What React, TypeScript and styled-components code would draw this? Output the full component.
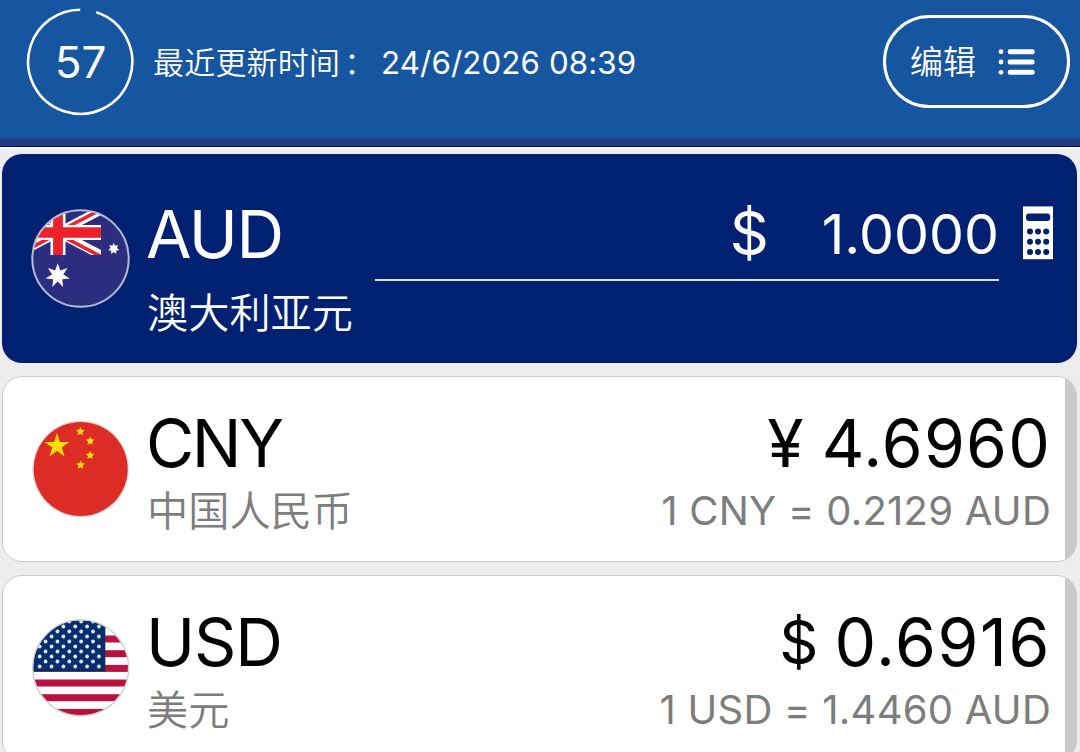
import React from "react";
import styled, { createGlobalStyle } from "styled-components";

const GlobalStyle = createGlobalStyle`
  * {
    box-sizing: border-box;
  }
  body {
    margin: 0;
    height: 752px;
    overflow: hidden;
    background: #ededed;
    font-family: Inter, "Noto Sans CJK SC", sans-serif;
  }
`;

const Header = styled.header`
  display: flex;
  align-items: center;
  height: 147px;
  padding: 0 10px 22px 26px;
  color: #fff;
  background: linear-gradient(
    #16559f 138px,
    #1b4a88 138px,
    #1b4a88 139px,
    #213a80 140px,
    #213a80 146px,
    #020f5a 146px
  );
`;

const Countdown = styled.div`
  display: grid;
  place-items: center;
  width: 109px;
  height: 109px;

  & > * {
    grid-area: 1 / 1;
  }

  span {
    font-size: 44px;
    line-height: 48px;
    padding-bottom: 1px;
  }
`;

const UpdatedAt = styled.div`
  display: flex;
  align-items: baseline;
  margin: 0 auto 0 18px;
  padding-bottom: 2px;
  line-height: 40px;
  white-space: nowrap;

  .label {
    width: 228px;
    font: 350 31px/40px "Noto Sans CJK SC", sans-serif;
    letter-spacing: 0.2px;
  }

  .colon {
    margin-left: 4px;
  }

  .time {
    font-size: 31.3px;
    letter-spacing: 0.1px;
  }
`;

const EditButton = styled.button`
  display: flex;
  align-items: center;
  gap: 22px;
  width: 187px;
  height: 93px;
  margin-top: -2px;
  padding: 0 0 0 24px;
  color: #fff;
  background: none;
  border: 3px solid #fff;
  border-radius: 47px;
  font: 350 33px/40px "Noto Sans CJK SC", sans-serif;

  span {
    padding-bottom: 3px;
  }
`;

const List = styled.main`
  display: flex;
  flex-direction: column;
  gap: 13px;
  padding: 5px 3px 0 2px;
  border-top: 2px solid #f8f8f8;
`;

const Card = styled.section<{ $active?: boolean }>`
  display: flex;
  align-items: flex-start;
  flex-shrink: 0;
  height: ${({ $active }) => ($active ? "209px" : "186px")};
  padding: ${({ $active }) => ($active ? "0 23px 0 29px" : "0 12px 0 28px")};
  color: ${({ $active }) => ($active ? "#fff" : "#000")};
  background: ${({ $active }) =>
    $active
      ? "#002171"
      : "linear-gradient(to left, #cacaca 11px, #fff 11px)"};
  border: ${({ $active }) => ($active ? "none" : "1px solid #cdcdcd")};
  border-radius: 20px;

  & > .flag {
    align-self: center;
  }
`;

const Label = styled.div<{ $active?: boolean }>`
  display: flex;
  flex-direction: column;
  gap: ${({ $active }) => ($active ? "19px" : "8px")};
  padding-top: ${({ $active }) => ($active ? "47px" : "33px")};
  margin-left: 17px;
`;

const Code = styled.div<{ $tracking: number }>`
  margin-left: -1px;
  font-size: 66px;
  line-height: 66px;
  letter-spacing: ${({ $tracking }) => $tracking}px;
`;

const Name = styled.div<{ $muted?: boolean }>`
  font: 350 41.2px/48px "Noto Sans CJK SC", sans-serif;
  color: ${({ $muted }) => ($muted ? "#7d7d7d" : "inherit")};
  white-space: nowrap;
`;

const AmountInput = styled.div`
  flex: 1;
  display: flex;
  justify-content: flex-end;
  align-items: flex-start;
  height: 78px;
  margin: 49px 24px 0 22px;
  border-bottom: 2px solid #dde2f0;
  font-size: 55.5px;
  line-height: 61px;

  .symbol {
    margin-right: 53px;
    font-size: 61px;
    line-height: 61px;
  }
`;

const CalculatorIcon = styled.svg`
  display: block;
  margin-top: 52px;
`;

const Quote = styled.div`
  display: flex;
  flex-direction: column;
  align-items: flex-end;
  gap: 11px;
  margin-left: auto;
  padding: 33px 13px 0 0;
`;

const Amount = styled.div<{ $tracking: number }>`
  display: flex;
  align-items: flex-start;
  font-size: 66px;
  line-height: 66px;
  letter-spacing: ${({ $tracking }) => $tracking}px;
`;

const Symbol = styled.span<{ $size: number; $gap: number }>`
  margin-right: ${({ $gap }) => $gap}px;
  font-size: ${({ $size }) => $size}px;
  letter-spacing: 0;
`;

const Rate = styled.div`
  font-size: 40px;
  line-height: 48px;
  letter-spacing: 0.25px;
  color: #7d7d7d;
  white-space: nowrap;
`;

const star = (cx: number, cy: number, r: number, inner: number, n = 5) =>
  Array.from({ length: n * 2 }, (_, i) => {
    const a = (Math.PI * i) / n - Math.PI / 2;
    const d = i % 2 ? inner : r;
    return `${(cx + d * Math.cos(a)).toFixed(2)},${(cy + d * Math.sin(a)).toFixed(2)}`;
  }).join(" ");

const FlagAU = () => (
  <svg className="flag" width="99" height="99" viewBox="0 0 99 99">
    <clipPath id="au">
      <circle cx="49.5" cy="49.5" r="48" />
    </clipPath>
    <clipPath id="au-canton">
      <rect x="-16" y="1" width="86" height="45" />
    </clipPath>
    <g clipPath="url(#au)">
      <rect width="99" height="99" fill="#2d2d80" />
      <g clipPath="url(#au-canton)">
        <path d="M-16 1 70 46M-16 46 70 1" stroke="#fff" strokeWidth="9" />
        <path
          d="M27 25 70 47.5M27 23 70 .5M-16 47 27 24.5M-16 -.5 27 22"
          stroke="#ee2029"
          strokeWidth="3.6"
        />
        <path d="M27 0V46" stroke="#fff" strokeWidth="15" />
        <path d="M-16 23.5H70" stroke="#fff" strokeWidth="15" />
        <path d="M27 0V46" stroke="#ee2029" strokeWidth="9.8" />
        <path d="M-16 23.5H70" stroke="#ee2029" strokeWidth="10.4" />
      </g>
      <polygon points={star(26.7, 66.7, 12.5, 5.8, 7)} fill="#fff" />
      <polygon points={star(82.7, 39.7, 5.8, 3.2, 7)} fill="#fff" />
    </g>
    <circle cx="49.5" cy="49.5" r="48.2" fill="none" stroke="#b4bbd2" strokeWidth="2" />
  </svg>
);

const FlagCN = () => (
  <svg className="flag" width="99" height="99" viewBox="0 0 99 99">
    <circle cx="49.7" cy="49" r="48.4" fill="#dfdcda" />
    <circle cx="49.7" cy="49" r="47" fill="#dc2c25" />
    <g fill="#ffde00">
      <polygon points={star(26, 26, 13, 5)} />
      <polygon points={star(49.3, 11.5, 4.6, 2.2)} />
      <polygon points={star(59.1, 21, 4.6, 2.2)} />
      <polygon points={star(59.1, 35.3, 4.6, 2.2)} />
      <polygon points={star(49.5, 45, 4.6, 2.2)} />
    </g>
  </svg>
);

const starRows = Array.from({ length: 10 }, (_, row) =>
  Array.from({ length: row % 2 ? 5 : 6 }, (_, col) => ({
    x: (row % 2 ? 14.6 : 8.7) + col * 11.85,
    y: 48.3 - row * 5,
  }))
).flat();

const FlagUS = () => (
  <svg className="flag" width="99" height="99" viewBox="0 0.8 99 99">
    <clipPath id="us">
      <circle cx="49.7" cy="49.6" r="47.6" />
    </clipPath>
    <g clipPath="url(#us)">
      <rect width="99" height="99" fill="#fff" />
      {[2.6, 17.3, 32, 46.7, 61.3, 76, 90.7].map((y) => (
        <rect key={y} y={y} width="99" height="7" fill="#b9123f" />
      ))}
      <rect width="74.3" height="53.3" fill="#062e6c" />
      {starRows.map(({ x, y }) => (
        <circle key={`${x}-${y}`} cx={x} cy={y} r="1.9" fill="#dcebfa" />
      ))}
    </g>
    <circle cx="49.7" cy="49.6" r="47.9" fill="none" stroke="#cfcfcf" strokeWidth="1.4" />
  </svg>
);

const rows = [
  {
    code: "CNY",
    name: "中国人民币",
    tracking: -2.4,
    Flag: FlagCN,
    symbol: "¥",
    symbolSize: 66,
    symbolGap: 18,
    amount: "4.6960",
    amountTracking: 1.2,
    rate: "1 CNY = 0.2129 AUD",
  },
  {
    code: "USD",
    name: "美元",
    tracking: -1.1,
    Flag: FlagUS,
    symbol: "$",
    symbolSize: 61,
    symbolGap: 16,
    amount: "0.6916",
    amountTracking: 1.6,
    rate: "1 USD = 1.4460 AUD",
  },
];

const App: React.FC = () => {
  return (
    <>
      <GlobalStyle />
      <Header>
        <Countdown>
          <svg width="109" height="109" viewBox="0 0 109 109" fill="none">
            <circle
              cx="54.2"
              cy="53.8"
              r="52.1"
              stroke="#fff"
              strokeWidth="2.6"
              pathLength="60"
              strokeDasharray="57 3"
              transform="rotate(-72 54.2 53.8)"
            />
          </svg>
          <span>57</span>
        </Countdown>
        <UpdatedAt>
          <span className="label">
            最近更新时间<span className="colon">：</span>
          </span>
          <span className="time">24/6/2026 08:39</span>
        </UpdatedAt>
        <EditButton>
          <span>编辑</span>
          <svg width="38" height="28" viewBox="0 0 38 28" fill="#fff">
            {[3.7, 14, 24.3].map((y) => (
              <g key={y}>
                <circle cx="3" cy={y} r="2.4" />
                <rect x="9.7" y={y - 2.5} width="27" height="5" rx="2.3" />
              </g>
            ))}
          </svg>
        </EditButton>
      </Header>
      <List>
        <Card $active>
          <FlagAU />
          <Label $active>
            <Code $tracking={-1.4}>AUD</Code>
            <Name>澳大利亚元</Name>
          </Label>
          <AmountInput>
            <span className="symbol">$</span>
            <span>1.0000</span>
          </AmountInput>
          <CalculatorIcon width="31" height="54" viewBox="0 0 31 54">
            <rect x="0" y="0.4" width="30" height="52.8" fill="#fff" />
            <g fill="#002171">
              <rect x="3" y="7.5" width="24.2" height="7.4" rx="3" />
              {[25.5, 35.7, 46].map((y) =>
                [7, 15, 23.2].map((x) => (
                  <circle key={`${x}-${y}`} cx={x} cy={y} r="3" />
                ))
              )}
            </g>
          </CalculatorIcon>
        </Card>
        {rows.map(({ Flag, ...row }) => (
          <Card key={row.code}>
            <Flag />
            <Label>
              <Code $tracking={row.tracking}>{row.code}</Code>
              <Name $muted>{row.name}</Name>
            </Label>
            <Quote>
              <Amount $tracking={row.amountTracking}>
                <Symbol $size={row.symbolSize} $gap={row.symbolGap}>
                  {row.symbol}
                </Symbol>
                <span>{row.amount}</span>
              </Amount>
              <Rate>{row.rate}</Rate>
            </Quote>
          </Card>
        ))}
      </List>
    </>
  );
};

export default App;
